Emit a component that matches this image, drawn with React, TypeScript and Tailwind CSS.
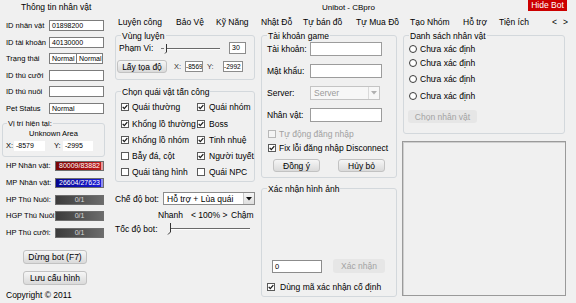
import React from "react";

type P = { className?: string; children?: React.ReactNode };

const Check = ({ checked, disabled }: { checked?: boolean; disabled?: boolean }) => (
  <span
    className={`inline-flex w-[8px] h-[8px] shrink-0 items-center justify-center border ${
      disabled ? "border-[#b8b8b8] bg-[#f4f4f4]" : "border-[#5a5a5a] bg-white"
    }`}
  >
    {checked && (
      <svg width="6" height="6" viewBox="0 0 6 6">
        <path d="M0.7 2.9 L2.3 4.6 L5.3 1.1" fill="none" stroke="#1a1a1a" strokeWidth="1.3" />
      </svg>
    )}
  </span>
);

const Radio = () => (
  <span className="inline-block w-[8px] h-[8px] shrink-0 rounded-full border border-[#3a3a3a] bg-white" />
);

const Group = ({ title, className, children }: P & { title: string }) => (
  <div className={`relative border border-[#d3d8dc] rounded-[3px] ${className ?? ""}`}>
    <span className="absolute left-[5px] -top-[5px] bg-[#f0f0f0] px-[1px] text-[8.5px] leading-[10px] whitespace-nowrap">
      {title}
    </span>
    {children}
  </div>
);

const Btn = ({ className, children }: P) => (
  <div
    className={`flex items-center justify-center rounded-[3px] border border-[#c2c2c2] bg-gradient-to-b from-[#f6f6f6] to-[#dadada] text-[8.5px] leading-[10px] whitespace-nowrap ${className ?? ""}`}
  >
    {children}
  </div>
);

const DisabledBtn = ({ className, children }: P) => (
  <div
    className={`flex items-center justify-center rounded-[3px] bg-[#e6e6e6] text-[#a3a3a3] text-[8.5px] leading-[10px] whitespace-nowrap ${className ?? ""}`}
  >
    {children}
  </div>
);

const LeftRow = ({ label, className, children }: P & { label: string }) => (
  <div className={`flex items-center h-[11px] pl-[6px] ${className ?? ""}`}>
    <span className="w-[43px] text-[7.5px] leading-[11px] whitespace-nowrap">{label}</span>
    {children}
  </div>
);

const LeftBox = ({ className, children }: P) => (
  <div
    className={`h-[11px] border border-[#7c7c7c] bg-white px-[2px] text-[7px] leading-[9px] whitespace-nowrap overflow-hidden ${className ?? ""}`}
  >
    {children}
  </div>
);

const Bar = ({
  label,
  value,
  max,
  text,
  fill,
  rest,
  textColor,
  className,
}: {
  label: string;
  value: number;
  max: number;
  text: string;
  fill: string;
  rest: string;
  textColor: string;
  className?: string;
}) => (
  <div className={`flex items-center h-[10px] pl-[6px] ${className ?? ""}`}>
    <span className="w-[49px] text-[7.5px] leading-[10px] whitespace-nowrap">{label}</span>
    <div className={`relative w-[49px] h-[10px] border border-[#6e6e6e] flex ${rest}`}>
      <div className={`h-full ${fill}`} style={{ width: `${(value / max) * 100}%` }} />
      <span
        className={`absolute inset-0 flex items-center justify-center text-[7px] leading-[8px] ${textColor}`}
      >
        {text}
      </span>
    </div>
  </div>
);

const FormInput = ({ className, children }: P) => (
  <div
    className={`h-[14px] border border-[#9c9c9c] bg-white px-[2px] text-[8px] leading-[12px] ${className ?? ""}`}
  >
    {children}
  </div>
);

const tabs: [string, string][] = [
  ["Luyện công", "w-[58px]"],
  ["Bảo Vệ", "w-[40px]"],
  ["Kỹ Năng", "w-[45px]"],
  ["Nhật Đỗ", "w-[42px]"],
  ["Tự bán đồ", "w-[53px]"],
  ["Tự Mua Đồ", "w-[54px]"],
  ["Tạo Nhóm", "w-[53px]"],
  ["Hỗ trợ", "w-[36px]"],
  ["Tiện ích", "w-[53px]"],
  ["<", "w-[11px]"],
  [">", "w-[10px]"],
];

const monsters: [string, boolean, string, boolean, string][] = [
  ["Quái thường", true, "Quái nhóm", true, "mt-[10px]"],
  ["Khổng lồ thường", true, "Boss", true, "mt-[7px]"],
  ["Khổng lồ nhóm", true, "Tinh nhuệ", true, "mt-[6px]"],
  ["Bẫy đá, cột", false, "Người tuyết", true, "mt-[6px]"],
  ["Quái tàng hình", false, "Quái NPC", false, "mt-[6px]"],
];

const radios = ["mt-[8px]", "mt-[4px]", "mt-[6px]", "mt-[7px]"];

export default function App() {
  return (
    <div className="w-[576px] h-[303px] overflow-hidden bg-[#f0f0f0] text-black flex font-['Liberation_Sans',Arial,sans-serif]">
      {/* LEFT COLUMN */}
      <div className="w-[106px] shrink-0 flex flex-col">
        <div className="h-[15px] pl-[21px] pt-[2px] text-[8.5px] leading-[10px] whitespace-nowrap">
          Thông tin nhân vật
        </div>
        <LeftRow label="ID nhân vật" className="mt-[5px]">
          <LeftBox className="w-[55px]">01898200</LeftBox>
        </LeftRow>
        <LeftRow label="ID tài khoản" className="mt-[6px]">
          <LeftBox className="w-[55px]">40130000</LeftBox>
        </LeftRow>
        <LeftRow label="Trạng thái" className="mt-[5px]">
          <LeftBox className="w-[28px]">Normal</LeftBox>
          <LeftBox className="w-[27px] -ml-px">Normal</LeftBox>
        </LeftRow>
        <LeftRow label="ID thú cưỡi" className="mt-[6px]">
          <LeftBox className="w-[55px]" />
        </LeftRow>
        <LeftRow label="ID thú nuôi" className="mt-[5px]">
          <LeftBox className="w-[55px]" />
        </LeftRow>
        <LeftRow label="Pet Status" className="mt-[6px]">
          <LeftBox className="w-[55px]">Normal</LeftBox>
        </LeftRow>

        <div className="relative mt-[9px] ml-[2px] w-[103px] h-[34px] border border-[#d3d8dc] rounded-[3px]">
          <span className="absolute left-[4px] -top-[5px] bg-[#f0f0f0] px-[1px] text-[7.5px] leading-[10px] whitespace-nowrap">
            Vị trí hiện tại:
          </span>
          <div className="mt-[6px] text-center text-[7.5px] leading-[8px]">Unknown Area</div>
          <div className="mt-[3px] flex items-center h-[10px] pl-[3px] text-[7.5px]">
            <span className="w-[8px]">X:</span>
            <span className="w-[31px] h-[10px] bg-white px-[2px] text-[7px] leading-[10px]">-8579</span>
            <span className="ml-[9px] w-[9px]">Y:</span>
            <span className="w-[30px] h-[10px] bg-white px-[2px] text-[7px] leading-[10px]">-2995</span>
          </div>
        </div>

        <Bar
          label="HP Nhân vật:"
          value={80009}
          max={83882}
          text="80009/83882"
          fill="bg-gradient-to-r from-[#7a0505] to-[#bf1a1a]"
          rest="bg-[#e39a9a]"
          textColor="text-white"
          className="mt-[4px]"
        />
        <Bar
          label="MP Nhân vật:"
          value={26604}
          max={27623}
          text="26604/27623"
          fill="bg-gradient-to-r from-[#06068e] to-[#1a1ad6]"
          rest="bg-[#8e8ef0]"
          textColor="text-white"
          className="mt-[7px]"
        />
        <Bar
          label="HP Thú Nuôi:"
          value={0}
          max={1}
          text="0/1"
          fill=""
          rest="bg-gradient-to-r from-[#3c3c3c] to-[#6c6c6c]"
          textColor="text-[#dadada]"
          className="mt-[7px]"
        />
        <Bar
          label="HGP Thú Nuôi:"
          value={0}
          max={1}
          text="0/1"
          fill=""
          rest="bg-gradient-to-r from-[#3c3c3c] to-[#6c6c6c]"
          textColor="text-[#dadada]"
          className="mt-[6px]"
        />
        <Bar
          label="HP Thú cưỡi:"
          value={0}
          max={1}
          text="0/1"
          fill=""
          rest="bg-gradient-to-r from-[#3c3c3c] to-[#6c6c6c]"
          textColor="text-[#dadada]"
          className="mt-[7px]"
        />

        <Btn className="mt-[12px] ml-[23px] w-[64px] h-[14px]">Dừng bot (F7)</Btn>
        <Btn className="mt-[7px] ml-[23px] w-[64px] h-[14px]">Lưu cấu hình</Btn>
        <div className="mt-[5px] pl-[6px] text-[8.5px] leading-[10px] whitespace-nowrap">Copyright © 2011</div>
      </div>

      {/* RIGHT AREA */}
      <div className="flex-1 flex flex-col">
        <div className="h-[15px] flex items-start">
          <span className="ml-[216px] mt-[3px] text-[8px] leading-[10px] whitespace-nowrap">Unibot - CBpro</span>
          <div className="ml-auto mr-[9px] w-[39px] h-[11px] bg-[#cc0000] text-white text-[8.5px] leading-[11px] text-center">
            Hide Bot
          </div>
        </div>

        <div className="h-[20px] flex pl-[12px] pt-[2px]">
          {tabs.map(([t, w]) => (
            <span key={t} className={`${w} text-[8.5px] leading-[10px] whitespace-nowrap`}>
              {t}
            </span>
          ))}
        </div>

        <div className="flex pl-[9px]">
          {/* COLUMN A */}
          <div className="w-[140px] flex flex-col">
            <Group title="Vùng luyện" className="h-[45px]">
              <div className="mt-[6px] flex items-center h-[12px] pl-[3px]">
                <span className="w-[41px] text-[8.5px] leading-[10px]">Phạm Vi:</span>
                <svg width="62" height="12" viewBox="0 0 62 12">
                  <line x1="1" y1="6.5" x2="4" y2="6.5" stroke="#7a7a7a" strokeWidth="1" />
                  <line x1="7" y1="6.5" x2="60" y2="6.5" stroke="#6a6a6a" strokeWidth="1" />
                  <line x1="7" y1="7.5" x2="60" y2="7.5" stroke="#ffffff" strokeWidth="1" />
                  <path d="M6.5 2 L6.5 10 L5 11.5" fill="none" stroke="#333" strokeWidth="1" />
                </svg>
                <div className="ml-[7px] w-[17px] h-[12px] border border-[#8c8c8c] bg-white px-[2px] text-[7px] leading-[10px]">
                  30
                </div>
              </div>
              <div className="mt-[6px] flex items-center h-[13px] pl-[1px]">
                <Btn className="w-[50px] h-[13px]">Lấy tọa độ</Btn>
                <span className="ml-[7px] w-[11px] text-[7.5px] text-[#333]">X:</span>
                <div className="w-[18px] h-[11px] border border-[#8c8c8c] bg-white text-[6.5px] leading-[9px] overflow-hidden">
                  -8569
                </div>
                <span className="ml-[4px] w-[16px] text-[7.5px] text-[#333]">Y:</span>
                <div className="w-[20px] h-[11px] border border-[#8c8c8c] bg-white text-[6.5px] leading-[9px] overflow-hidden">
                  -2992
                </div>
              </div>
            </Group>

            <Group title="Chọn quái vật tấn công" className="mt-[11px] h-[91px]">
              {monsters.map(([a, ac, b, bc, mt]) => (
                <div key={a} className={`${mt} flex items-center h-[10px] pl-[5px] text-[8.5px] leading-[10px]`}>
                  <div className="w-[76px] flex items-center gap-[3px] whitespace-nowrap">
                    <Check checked={ac} />
                    <span>{a}</span>
                  </div>
                  <div className="flex items-center gap-[4px] whitespace-nowrap">
                    <Check checked={bc} />
                    <span>{b}</span>
                  </div>
                </div>
              ))}
            </Group>

            <div className="mt-[10px] flex items-center h-[13px]">
              <span className="w-[48px] text-[8.5px] leading-[10px] whitespace-nowrap">Chế độ bot:</span>
              <div className="w-[92px] h-[13px] border border-[#8c8c8c] bg-white flex items-center">
                <span className="flex-1 pl-[3px] text-[8.5px] leading-[10px] whitespace-nowrap">Hỗ trợ + Lùa quái</span>
                <div className="w-[11px] h-[11px] border-l border-[#c8c8c8] bg-gradient-to-b from-[#f6f6f6] to-[#dedede] flex items-center justify-center">
                  <svg width="6" height="4" viewBox="0 0 6 4">
                    <path d="M0 0 L6 0 L3 3.5 Z" fill="#111" />
                  </svg>
                </div>
              </div>
            </div>

            <div className="mt-[5px] flex h-[10px] pl-[43px] text-[8.5px] leading-[10px] whitespace-nowrap">
              <span className="w-[31px]">Nhanh</span>
              <span className="w-[42px] pl-[2px]">&lt; 100% &gt;</span>
              <span>Chậm</span>
            </div>

            <div className="mt-[2px] flex items-center h-[13px]">
              <span className="w-[52px] text-[8.5px] leading-[10px] whitespace-nowrap">Tốc độ bot:</span>
              <svg width="85" height="13" viewBox="0 0 85 13">
                <line x1="4" y1="6.5" x2="83" y2="6.5" stroke="#6a6a6a" strokeWidth="1" />
                <line x1="4" y1="7.5" x2="83" y2="7.5" stroke="#ffffff" strokeWidth="1" />
                <path d="M3.5 1 L3.5 10 L1 12.5" fill="none" stroke="#333" strokeWidth="1" />
              </svg>
            </div>
          </div>

          {/* COLUMN B */}
          <div className="ml-[6px] w-[136px] flex flex-col">
            <Group title="Tài khoản game" className="h-[143px]">
              {[
                ["Tài khoản:", "mt-[6px]"],
                ["Mật khẩu:", "mt-[8px]"],
              ].map(([l, mt]) => (
                <div key={l} className={`${mt} flex items-center h-[14px] pl-[5px]`}>
                  <span className="w-[43px] text-[8.5px] leading-[10px] whitespace-nowrap">{l}</span>
                  <FormInput className="w-[72px]" />
                </div>
              ))}
              <div className="mt-[8px] flex items-center h-[14px] pl-[5px]">
                <span className="w-[43px] text-[8.5px] leading-[10px]">Server:</span>
                <div className="w-[70px] h-[14px] border border-[#c4c4c4] bg-[#f7f7f7] flex items-center">
                  <span className="flex-1 pl-[3px] text-[8.5px] leading-[10px] text-[#9a9a9a]">Server</span>
                  <div className="w-[11px] h-[12px] border-l border-[#dadada] flex items-center justify-center">
                    <svg width="6" height="4" viewBox="0 0 6 4">
                      <path d="M0 0 L6 0 L3 3.5 Z" fill="#b0b0b0" />
                    </svg>
                  </div>
                </div>
              </div>
              <div className="mt-[8px] flex items-center h-[14px] pl-[5px]">
                <span className="w-[43px] text-[8.5px] leading-[10px] whitespace-nowrap">Nhân vật:</span>
                <FormInput className="w-[72px]" />
              </div>
              <div className="mt-[7px] flex items-center gap-[3px] h-[10px] pl-[6px] text-[8.5px] leading-[10px] text-[#a0a0a0] whitespace-nowrap">
                <Check disabled />
                <span>Tự động đăng nhập</span>
              </div>
              <div className="mt-[4px] flex items-center gap-[3px] h-[10px] pl-[6px] text-[8.5px] leading-[10px] whitespace-nowrap">
                <Check checked />
                <span>Fix lỗi đăng nhập Disconnect</span>
              </div>
              <div className="mt-[6px] flex h-[13px] pl-[11px]">
                <Btn className="w-[47px] h-[13px]">Đồng ý</Btn>
                <Btn className="ml-[18px] w-[47px] h-[13px]">Hủy bỏ</Btn>
              </div>
            </Group>

            <Group title="Xác nhận hình ảnh" className="mt-[10px] h-[109px]">
              <div className="mt-[70px] flex items-center h-[14px] pl-[10px]">
                <div className="w-[50px] h-[13px] border border-[#8c8c8c] bg-white px-[2px] text-[7.5px] leading-[11px]">
                  0
                </div>
                <DisabledBtn className="ml-[11px] w-[52px] h-[14px]">Xác nhận</DisabledBtn>
              </div>
              <div className="mt-[9px] flex items-center gap-[5px] h-[10px] pl-[5px] text-[8.5px] leading-[10px] whitespace-nowrap">
                <Check checked />
                <span>Dùng mã xác nhận cố định</span>
              </div>
            </Group>
          </div>

          {/* COLUMN C */}
          <div className="ml-[5px] w-[164px] flex flex-col">
            <Group title="Danh sách nhân vật" className="mx-[1px] h-[99px]">
              {radios.map((mt, i) => (
                <div key={i} className={`${mt} flex items-center gap-[3px] h-[10px] pl-[5px] text-[8.5px] leading-[10px] whitespace-nowrap`}>
                  <Radio />
                  <span>Chưa xác định</span>
                </div>
              ))}
              <DisabledBtn className="mt-[9px] ml-[4px] w-[69px] h-[13px]">Chọn nhân vật</DisabledBtn>
            </Group>
            <div className="mt-[7px] h-[155px] border border-[#9a9a9a] shadow-[inset_1px_1px_0_#cfcfcf]" />
          </div>
        </div>
      </div>
    </div>
  );
}
